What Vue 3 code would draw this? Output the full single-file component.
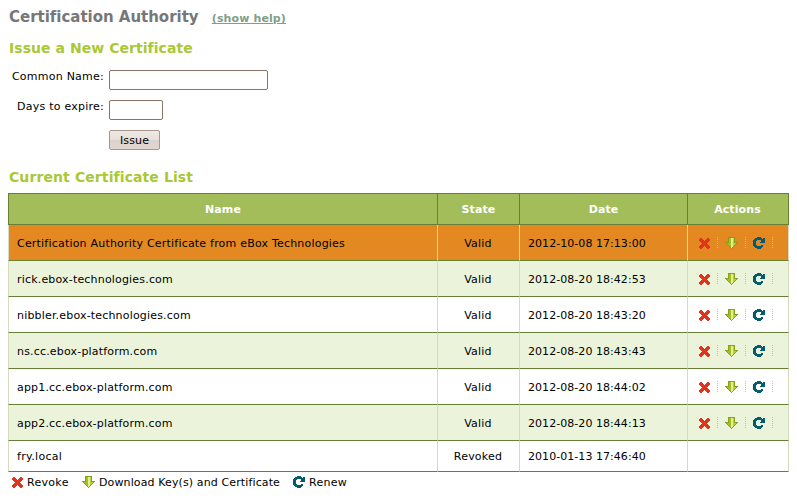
<script setup>
const rows = [
  { name: 'Certification Authority Certificate from eBox Technologies', state: 'Valid', date: '2012-10-08 17:13:00', kind: 'ca' },
  { name: 'rick.ebox-technologies.com', state: 'Valid', date: '2012-08-20 18:42:53', kind: 'even' },
  { name: 'nibbler.ebox-technologies.com', state: 'Valid', date: '2012-08-20 18:43:20', kind: 'odd' },
  { name: 'ns.cc.ebox-platform.com', state: 'Valid', date: '2012-08-20 18:43:43', kind: 'even' },
  { name: 'app1.cc.ebox-platform.com', state: 'Valid', date: '2012-08-20 18:44:02', kind: 'odd' },
  { name: 'app2.cc.ebox-platform.com', state: 'Valid', date: '2012-08-20 18:44:13', kind: 'even' },
  { name: 'fry.local', state: 'Revoked', date: '2010-01-13 17:46:40', kind: 'odd last' },
]
</script>

<template>
  <svg class="defs" width="0" height="0">
    <symbol id="i-revoke" viewBox="0 0 11 11">
      <path fill="#e0341c" d="M1 0H3V1H4V2H5V3H6V2H7V1H8V0H10V1H11V3H10V4H9V5H8V6H9V7H10V8H11V10H10V11H8V10H7V9H6V8H5V9H4V10H3V11H1V10H0V8H1V7H2V6H3V5H2V4H1V3H0V1H1Z" />
    </symbol>
    <symbol id="i-download" viewBox="0 0 13 12">
      <path fill="#8a9f14" d="M3 0H10V5H13V6H12V7H11V8H10V9H9V10H8V11H7V12H6V11H5V10H4V9H3V8H2V7H1V6H0V5H3Z" />
      <path fill="#a5bd26" d="M4 1H7V11H6V10H5V9H4V8H3V7H2V6H4Z" />
      <path fill="#e0f090" d="M6 1H8V8H9V9H8V10H7V11H6Z" />
      <path fill="#b9d138" d="M8 1H9V6H11V7H10V8H9V9H8Z" />
    </symbol>
    <symbol id="i-renew" viewBox="0 0 12 12">
      <path fill="#045c6e" d="M4 0H8V1H9V2H10V1H12V6H7V5H8V3H4V4H3V8H4V9H8V8H10V10H9V11H8V12H4V11H2V10H1V9H0V3H1V2H2V1H4Z" />
    </symbol>
  </svg>
  <main class="page">
    <h1>Certification Authority <a class="help">(show help)</a></h1>
    <h2>Issue a New Certificate</h2>
    <form class="form" @submit.prevent>
      <label for="cn">Common Name:</label>
      <input id="cn" class="field wide" type="text" />
      <label for="days">Days to expire:</label>
      <input id="days" class="field narrow" type="text" />
      <button class="issue" type="submit">Issue</button>
    </form>
    <h2 class="list-title">Current Certificate List</h2>
    <div class="table">
      <div class="row head">
        <span class="cell">Name</span><span class="cell">State</span><span class="cell">Date</span><span class="cell">Actions</span>
      </div>
      <div v-for="r in rows" :key="r.name" class="row" :class="r.kind">
        <span class="cell name">{{ r.name }}</span>
        <span class="cell state">{{ r.state }}</span>
        <span class="cell date">{{ r.date }}</span>
        <span class="cell actions">
          <template v-if="r.state === 'Valid'">
            <svg class="x"><use href="#i-revoke" /></svg><i class="sep" />
            <svg class="d"><use href="#i-download" /></svg><i class="sep" />
            <svg class="r"><use href="#i-renew" /></svg><i class="sep" />
          </template>
        </span>
      </div>
    </div>
    <div class="legend">
      <svg class="x"><use href="#i-revoke" /></svg><span class="t1">Revoke</span>
      <svg class="d"><use href="#i-download" /></svg><span class="t2">Download Key(s) and Certificate</span>
      <svg class="r"><use href="#i-renew" /></svg><span class="t3">Renew</span>
    </div>
  </main>
</template>

<style>
body { background: #fff; }
</style>

<style scoped>
.defs { display: block; }
.page {
  box-sizing: border-box;
  width: 797px;
  height: 502px;
  padding: 7px 8px 0;
  font: 11px/14px "DejaVu Sans", sans-serif;
  color: #000;
  overflow: hidden;
}
h1 { margin: 0 0 0 1px; height: 20px; font-size: 15px; line-height: 20px; letter-spacing: -0.02px; color: #777; white-space: nowrap; }
.help { margin-left: 8px; font-size: 11px; letter-spacing: 0.12px; color: #7f9f87; text-decoration: underline; }
h2 { margin: 12px 0 0 1px; height: 18px; font-size: 14px; line-height: 18px; letter-spacing: 0.05px; color: #a9c834; }
.form {
  display: grid;
  grid-template-columns: 96px 160px;
  grid-template-rows: 20px 20px 20px;
  column-gap: 5px;
  row-gap: 10px;
  margin-top: 13px;
}
label { margin-top: -1px; text-align: right; line-height: 15px; letter-spacing: 0.24px; white-space: nowrap; }
.field { box-sizing: border-box; height: 20px; margin: 0; padding: 2px; border: 1px solid #897467; border-radius: 2px; background: #fff; outline: 0; }
.wide { width: 159px; }
.narrow { width: 54px; }
.issue {
  grid-column: 2;
  box-sizing: border-box;
  width: 51px;
  height: 20px;
  padding: 1px 0 0;
  border: 1px solid #a8968c;
  border-radius: 2px;
  background: linear-gradient(#eee9e5, #e7dfda 48%, #ddd2cb 52%, #e1d6d0);
  font: 11px/17px "DejaVu Sans", sans-serif;
  letter-spacing: 0.15px;
  color: #000;
}
h2.list-title { margin-top: 18px; letter-spacing: 0.1px; }
.table { width: 781px; margin-top: 7px; }
.row { display: grid; grid-template-columns: 430px 82px 168px 101px; height: 36px; }
.cell { box-sizing: border-box; display: flex; align-items: center; justify-content: center; padding-top: 2px; border-right: 1px solid #d7dabf; border-bottom: 1px solid #668136; white-space: nowrap; }
.row .cell:first-child { border-left: 1px solid #d7dabf; }
.head { height: 32px; background: #a4bd5b; color: #fff; font-weight: bold; letter-spacing: 0.1px; }
.head .cell, .head .cell:first-child { border-color: #668136; border-top: 1px solid #668136; }
.head .cell:last-child { padding-right: 1px; }
.ca { background: #e48922; }
.even { background: #ebf4da; }
.last { height: 31px; }
.cell.name { justify-content: flex-start; padding-left: 8px; letter-spacing: 0.18px; }
.ca .cell.name { letter-spacing: 0.205px; }
.last .cell.name { letter-spacing: 0.3px; }
.cell.state { padding-right: 1px; letter-spacing: 0.2px; }
.cell.date { justify-content: flex-start; padding-left: 8px; letter-spacing: 0.05px; }
.cell.actions { justify-content: flex-start; padding: 0 0 0 11px; }
svg { display: block; flex: none; shape-rendering: crispEdges; }
.x { width: 11px; height: 11px; }
.d { width: 13px; height: 12px; }
.r { width: 12px; height: 12px; }
.actions .x { margin-top: 1px; }
.sep { width: 1px; height: 11px; flex: none; margin: 0 7px; background: repeating-linear-gradient(#bbbfc0 0 1px, transparent 1px 2px); }
.legend { display: flex; align-items: center; height: 20px; padding: 1px 0 0 4px; white-space: nowrap; }
.legend svg { margin-top: -1px; }
.legend .d, .legend .r { margin-top: -2px; }
.t1, .t2, .t3 { margin-left: 4px; }
.t1 { width: 55px; letter-spacing: 0.3px; }
.t2 { width: 194px; letter-spacing: 0.12px; }
.t3 { letter-spacing: 0.3px; }
</style>
